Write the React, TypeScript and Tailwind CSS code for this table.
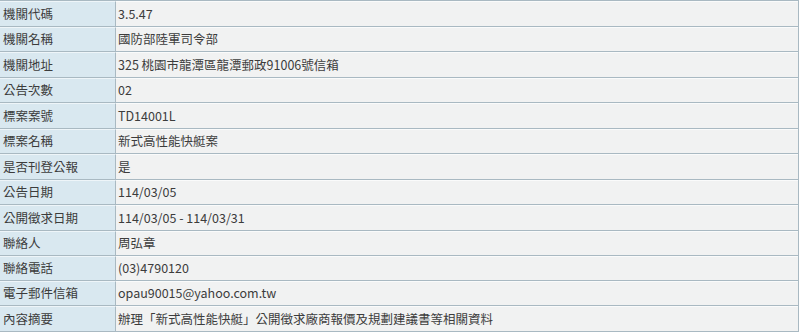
const rows: { label: string; value: string; h: string }[] = [
  { label: "機關代碼", value: "3.5.47", h: "h-[26px]" },
  { label: "機關名稱", value: "國防部陸軍司令部", h: "h-[25px]" },
  { label: "機關地址", value: "325 桃園市龍潭區龍潭郵政91006號信箱", h: "h-[26px]" },
  { label: "公告次數", value: "02", h: "h-[25px]" },
  { label: "標案案號", value: "TD14001L", h: "h-[26px]" },
  { label: "標案名稱", value: "新式高性能快艇案", h: "h-[25px]" },
  { label: "是否刊登公報", value: "是", h: "h-[26px]" },
  { label: "公告日期", value: "114/03/05", h: "h-[25px]" },
  { label: "公開徵求日期", value: "114/03/05 - 114/03/31", h: "h-[26px]" },
  { label: "聯絡人", value: "周弘章", h: "h-[25px]" },
  { label: "聯絡電話", value: "(03)4790120", h: "h-[25px]" },
  { label: "電子郵件信箱", value: "opau90015@yahoo.com.tw", h: "h-[25px]" },
  { label: "內容摘要", value: "辦理「新式高性能快艇」公開徵求廠商報價及規劃建議書等相關資料", h: "h-[26px]" },
];

export default function App() {
  return (
    <div className="w-[800px] h-[332px] bg-white overflow-hidden">
      <div
        className="w-[799px] border-t border-r border-[#a9b9c2] text-[12.5px] text-[#3c3c3c] leading-none"
        style={{ fontFamily: '"Noto Sans CJK TC", "Noto Sans", sans-serif' }}
      >
        {rows.map((r) => (
          <div key={r.label} className={`flex ${r.h} border-b border-[#a9b9c2]`}>
            <div className="w-[116px] shrink-0 flex items-center pl-[3px] bg-[#d9e8f0] border-r border-[#a9b9c2] border-t border-t-[#eef5f9]">
              {r.label}
            </div>
            <div className="flex-1 flex items-center pl-[2px] bg-[#f1f2f2] border-t border-t-[#fafbfb]">
              {r.value}
            </div>
          </div>
        ))}
      </div>
    </div>
  );
}
